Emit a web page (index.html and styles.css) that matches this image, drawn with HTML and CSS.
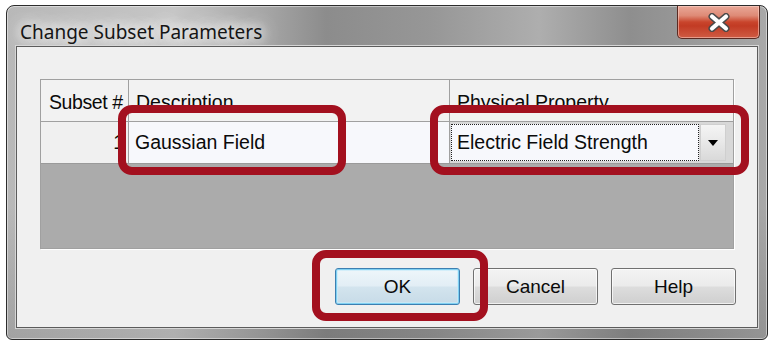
FILE: index.html
```html
<!DOCTYPE html>
<html>
<head>
<meta charset="utf-8">
<link rel="stylesheet" href="styles.css">
</head>
<body>
<div class="stage">
  <div class="window">
    <div class="titlebar">
      <span class="title">Change Subset Parameters</span>
      <div class="close">
        <svg width="24" height="19" viewBox="0 0 24 19">
          <path d="M5 3.5 L19 15.5 M19 3.5 L5 15.5" stroke="#4a4a4a" stroke-width="7" stroke-linecap="round"/>
          <path d="M5 3.5 L19 15.5 M19 3.5 L5 15.5" stroke="#ffffff" stroke-width="4.2" stroke-linecap="round"/>
        </svg>
      </div>
    </div>
    <div class="client">
      <div class="grid">
        <div class="row head">
          <div class="cell c1">Subset #</div>
          <div class="cell c2">Description</div>
          <div class="cell c3">Physical Property</div>
        </div>
        <div class="row data">
          <div class="cell c1 num">1</div>
          <div class="cell c2 desc">Gaussian Field</div>
          <div class="cell c3 prop">
            <div class="combo">Electric Field Strength</div>
            <div class="drop">
              <svg width="10" height="6" viewBox="0 0 10 6"><path d="M0 0 H10 L5 6 Z" fill="#000"/></svg>
            </div>
          </div>
        </div>
        <div class="empty"></div>
      </div>
      <div class="buttons">
        <div class="btn default">OK</div>
        <div class="btn">Cancel</div>
        <div class="btn">Help</div>
      </div>
    </div>
  </div>
  <div class="mark mark-desc"></div>
  <div class="mark mark-prop"></div>
  <div class="mark mark-ok"></div>
</div>
</body>
</html>
```

FILE: styles.css
```css
* { box-sizing: border-box; }
html, body { margin: 0; padding: 0; background: #ffffff; }
body { width: 776px; height: 343px; overflow: hidden; }

.stage {
  position: relative;
  width: 776px;
  height: 343px;
  padding: 5px 0 0 6px;
}

.window {
  width: 762px;
  height: 335px;
  border: 1px solid #2c2c2c;
  border-radius: 8px 8px 6px 6px;
  background:
    linear-gradient(180deg, rgba(255,255,255,0) 0%, rgba(255,255,255,0) 60%, rgba(0,0,0,0.12) 100%),
    linear-gradient(90deg, #b8b8b8 0%, #c6c6c6 22%, #a6a6a6 34%, #8c8c8c 42%, #979797 56%, #aeaeae 70%, #8e8e8e 82%, #9c9c9c 92%, #a8a8a8 100%);
  box-shadow: inset 0 0 0 1px rgba(255,255,255,0.45);
  display: flex;
  flex-direction: column;
}

.titlebar {
  height: 40px;
  display: flex;
  align-items: flex-start;
  flex-shrink: 0;
}
.title {
  font-family: "Noto Sans", "Open Sans", sans-serif;
  font-size: 19px;
  line-height: 22px;
  color: #151515;
  padding: 15px 0 0 13px;
  letter-spacing: 0px;
  text-shadow: 0 0 8px #f4f4f4, 0 0 14px #f0f0f0, 0 0 20px #eeeeee, 0 0 26px #e8e8e8;
}
.close {
  margin-left: auto;
  margin-right: 7px;
  width: 83px;
  height: 33px;
  border: 1px solid #5a2a22;
  border-top: none;
  border-radius: 0 0 5px 5px;
  background: linear-gradient(180deg, #e9a898 0%, #de8a76 30%, #c9452c 50%, #c23b24 62%, #cf5c44 100%);
  box-shadow: inset 0 0 0 1px rgba(255,220,210,0.5);
  display: flex;
  align-items: center;
  justify-content: center;
}

.client {
  flex: 1;
  margin: 0 9px 11px 9px;
  background: #f0f0f0;
  border: 1px solid #5c5c5c;
  box-shadow: 0 0 0 1px #d6d6d6;
  padding: 32px 0 0 23px;
  display: flex;
  flex-direction: column;
}

.grid {
  width: 694px;
  height: 170px;
  border: 1px solid #a0a0a0;
  box-shadow: 1px 1px 0 #ffffff;
  background: #ababab;
  display: flex;
  flex-direction: column;
  font-family: "Liberation Sans", Arial, sans-serif;
  font-size: 19.5px;
  color: #0a0a0a;
}
.row { display: flex; flex-shrink: 0; }
.head { height: 42px; border-bottom: 1px solid #a0a0a0; background: #f2f2f2; }
.data { height: 42px; border-bottom: 1px solid #9a9a9a; }
.cell {
  border-right: 1px solid #a0a0a0;
  display: flex;
  align-items: flex-end;
  padding: 0 0 10px 6px;
  white-space: nowrap;
  overflow: hidden;
}
.head .cell { padding-bottom: 9px; padding-left: 7px; line-height: 20px; }
.c1 { width: 88px; }
.c2 { width: 321px; }
.c3 { flex: 1; border-right: none; }
.head .c1 { padding-left: 8px; letter-spacing: -0.4px; }

.num { background: #f0f0f0; justify-content: flex-end; padding-right: 4px; align-items: center; padding-bottom: 0; }
.desc { background: #f7f8fc; align-items: center; padding: 0 0 0 6px; }
.prop { background: #d8d8d8; padding: 2px 7px 2px 1px; align-items: stretch; }
.combo {
  flex: 1;
  background: #f7f8fc;
  border: 1px dotted #202020;
  padding-left: 5px;
  display: flex;
  align-items: center;
}
.drop {
  width: 26px;
  margin-left: 1px;
  background: linear-gradient(180deg, #f4f4f4 0%, #e8e8e8 50%, #d9d9d9 100%);
  border: 1px solid #cfcfcf;
  display: flex;
  align-items: center;
  justify-content: center;
}
.empty { flex: 1; }

.buttons {
  display: flex;
  justify-content: flex-end;
  gap: 13px;
  margin-top: 19px;
  margin-right: 21px;
}
.btn {
  width: 125px;
  height: 37px;
  border: 1px solid #707070;
  border-radius: 3px;
  background: linear-gradient(180deg, #f3f3f3 0%, #ebebeb 49%, #dddddd 51%, #cfcfcf 100%);
  box-shadow: inset 0 0 0 1px rgba(255,255,255,0.7);
  display: flex;
  align-items: center;
  justify-content: center;
  font-family: "Liberation Sans", Arial, sans-serif;
  font-size: 19px;
  color: #0a0a0a;
}
.btn.default {
  border-color: #3c7fb1;
  box-shadow: inset 0 0 0 1px #7fd0f2, inset 0 0 0 2px rgba(200,235,250,0.7);
  background: linear-gradient(180deg, #eef6fa 0%, #e2eef5 49%, #d3e4ee 51%, #c7dbe7 100%);
}

.mark {
  position: absolute;
  border: 8px solid #a3101f;
  border-radius: 14px;
}
.mark-desc { left: 118px; top: 105px; width: 228px; height: 70px; }
.mark-prop { left: 430px; top: 105px; width: 319px; height: 70px; }
.mark-ok { left: 312px; top: 250px; width: 176px; height: 71px; }
```
